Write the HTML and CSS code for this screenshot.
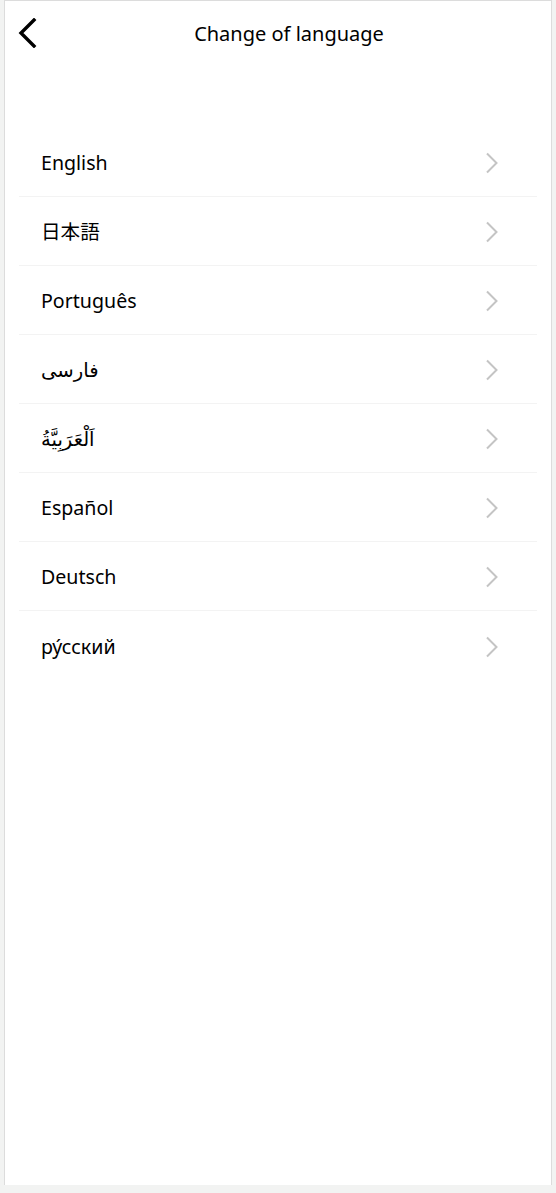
FILE: index.html
```html
<!DOCTYPE html>
<html lang="en">
<head>
<meta charset="utf-8">
<title>Change of language</title>
<link rel="stylesheet" href="styles.css">
</head>
<body>
<div class="page">
  <header class="header">
    <button class="back" aria-label="Back">
      <svg width="20" height="30" viewBox="0 0 20 30"><path d="M17 2 L4 15 L17 28" fill="none" stroke="#000" stroke-width="3.4" stroke-linecap="square"/></svg>
    </button>
    <h1 class="title">Change of language</h1>
  </header>
  <ul class="list">
    <li class="row"><span class="label">English</span><svg class="chev" width="14" height="22" viewBox="0 0 14 22"><path d="M2 1.5 L11.5 11 L2 20.5" fill="none" stroke="#c4c4c4" stroke-width="2"/></svg></li>
    <li class="row"><span class="label">日本語</span><svg class="chev" width="14" height="22" viewBox="0 0 14 22"><path d="M2 1.5 L11.5 11 L2 20.5" fill="none" stroke="#c4c4c4" stroke-width="2"/></svg></li>
    <li class="row"><span class="label">Português</span><svg class="chev" width="14" height="22" viewBox="0 0 14 22"><path d="M2 1.5 L11.5 11 L2 20.5" fill="none" stroke="#c4c4c4" stroke-width="2"/></svg></li>
    <li class="row"><span class="label">فارسی</span><svg class="chev" width="14" height="22" viewBox="0 0 14 22"><path d="M2 1.5 L11.5 11 L2 20.5" fill="none" stroke="#c4c4c4" stroke-width="2"/></svg></li>
    <li class="row"><span class="label">اَلْعَرَبِيَّةُ</span><svg class="chev" width="14" height="22" viewBox="0 0 14 22"><path d="M2 1.5 L11.5 11 L2 20.5" fill="none" stroke="#c4c4c4" stroke-width="2"/></svg></li>
    <li class="row"><span class="label">Español</span><svg class="chev" width="14" height="22" viewBox="0 0 14 22"><path d="M2 1.5 L11.5 11 L2 20.5" fill="none" stroke="#c4c4c4" stroke-width="2"/></svg></li>
    <li class="row"><span class="label">Deutsch</span><svg class="chev" width="14" height="22" viewBox="0 0 14 22"><path d="M2 1.5 L11.5 11 L2 20.5" fill="none" stroke="#c4c4c4" stroke-width="2"/></svg></li>
    <li class="row"><span class="label">ру́сский</span><svg class="chev" width="14" height="22" viewBox="0 0 14 22"><path d="M2 1.5 L11.5 11 L2 20.5" fill="none" stroke="#c4c4c4" stroke-width="2"/></svg></li>
  </ul>
</div>
</body>
</html>
```
FILE: styles.css
```css
html, body {
  margin: 0;
  padding: 0;
  background: #f2f3f2;
}
body {
  font-family: "Noto Sans", "Open Sans", "DejaVu Sans", "Noto Sans CJK JP", sans-serif;
  color: #000;
}
.page {
  box-sizing: border-box;
  margin-left: 4px;
  width: 548px;
  height: 1185px;
  background: #fff;
  border: 1px solid #dcdcdc;
  border-bottom: none;
}
.header {
  height: 67px;
  display: flex;
  align-items: center;
  justify-content: center;
  position: relative;
}
.back {
  position: absolute;
  left: 12px;
  top: 17px;
  padding: 0;
  border: 0;
  background: none;
  display: flex;
}
.title {
  margin: 0;
  font-size: 20px;
  font-weight: 400;
  letter-spacing: 0;
  transform: translate(11px, -1px);
}
.list {
  list-style: none;
  margin: 60px 14px 0 14px;
  padding: 0;
}
.row {
  height: 69px;
  box-sizing: border-box;
  display: flex;
  align-items: center;
  justify-content: space-between;
  padding: 2px 38px 0 22px;
  border-bottom: 1px solid #f3f3f3;
}
.row:last-child {
  border-bottom: none;
}
.label {
  font-size: 19.6px;
  line-height: 1;
  font-family: "Noto Sans", "Open Sans", "DejaVu Sans", "Noto Sans CJK JP", sans-serif;
}
.chev {
  display: block;
}
```
